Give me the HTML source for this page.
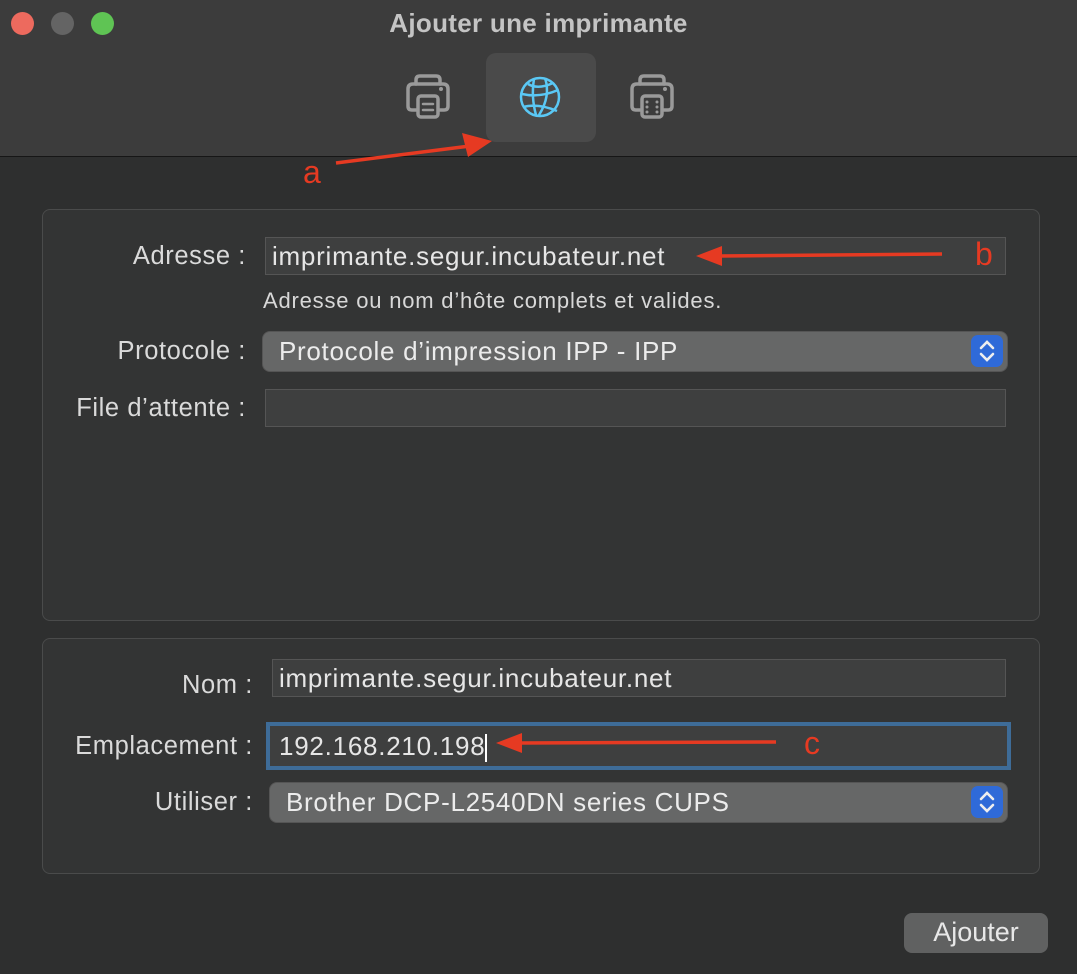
<!DOCTYPE html>
<html><head><meta charset="utf-8"><style>
*{box-sizing:border-box;margin:0;padding:0}
body{width:1077px;height:974px;background:#2e2f2f;font-family:"Liberation Sans",sans-serif;position:relative;overflow:hidden;color:#dcdcdc}
.abs{position:absolute}
.tb{left:0;top:0;width:1077px;height:157px;background:#3c3c3c;border-bottom:1px solid #161616}
.dot{width:23px;height:23px;border-radius:50%;top:12px}
.title{left:0;width:1077px;text-align:center;top:7px;font-size:26px;font-weight:bold;color:#c4c4c4;line-height:32px;letter-spacing:0.3px}
.sel{left:486px;top:53px;width:110px;height:89px;background:#4a4a4a;border-radius:10px}
.panel{left:42px;width:998px;border:1px solid #4a4b4b;border-radius:8px;background:#333434}
.lbl{font-size:25.5px;color:#dadada;text-align:right;width:240px;height:38px;line-height:38px;white-space:nowrap;letter-spacing:0.6px}
.fld{background:#3e3f3f;border:1px solid #555;font-size:26px;color:#e6e6e6;padding-left:6px;line-height:36px;white-space:nowrap;letter-spacing:0.75px}
.pop{background:#666767;border-radius:7px;font-size:26px;color:#ececec;padding-left:16px;line-height:38px;box-shadow:0 0 0 1px #555;white-space:nowrap;letter-spacing:0.7px}
.st{width:32px;height:32px;background:#2f6ad8;border-radius:7px;top:3px;right:4px}
.red{color:#e63a22;font-size:32px}
</style></head><body>
<div class="abs tb"></div>
<div class="abs dot" style="left:11px;background:#ed6a5e"></div>
<div class="abs dot" style="left:51px;background:#646464"></div>
<div class="abs dot" style="left:91px;background:#5fc454"></div>
<div class="abs title">Ajouter une imprimante</div>
<div class="abs sel"></div>
<svg class="abs" style="left:0;top:0" width="1077" height="200">
<g fill="none" stroke="#9a9a9a" stroke-width="3.5" stroke-linecap="round">
<path d="M416 84 v-4 q0-4 4-4 h16 q4 0 4 4 v4"/>
<path d="M416 110 h-4 q-4 0-4-4 v-17 q0-5 5-5 h30 q5 0 5 5 v17 q0 4-4 4 h-4"/>
<rect x="418" y="96" width="20" height="21" rx="3"/>
<path d="M423 104 h10 M423 110 h10" stroke-width="2.5"/>
<path d="M640 84 v-4 q0-4 4-4 h16 q4 0 4 4 v4"/>
<path d="M640 110 h-4 q-4 0-4-4 v-17 q0-5 5-5 h30 q5 0 5 5 v17 q0 4-4 4 h-4"/>
<rect x="642" y="96" width="20" height="21" rx="3"/>
</g>
<circle cx="441" cy="89" r="2" fill="#9a9a9a"/><circle cx="665" cy="89" r="2" fill="#9a9a9a"/>
<g fill="#9a9a9a"><circle cx="647" cy="102" r="1.5"/><circle cx="647" cy="107" r="1.5"/><circle cx="647" cy="112" r="1.5"/><circle cx="657" cy="102" r="1.5"/><circle cx="657" cy="107" r="1.5"/><circle cx="657" cy="112" r="1.5"/></g>
<g fill="none" stroke="#5ac8f5" stroke-width="2.5">
<ellipse cx="540" cy="97" rx="19" ry="19"/>
<path d="M528 84 q10 6 25 -1 M522 94 q18 4 36 -4 M523 107 q15 -4 34 4 M534 79 q-3 18 2 36 M545 78 q6 18 -6 37"/>
</g>
<path d="M336 163 L470 146" stroke="#e63a22" stroke-width="3.5"/>
<path d="M462 133 L492 141 L468 157 Z" fill="#e63a22"/>
</svg>
<div class="abs red" style="left:303px;top:154px">a</div>

<div class="abs panel" style="top:209px;height:412px"></div>
<div class="abs lbl" style="left:6px;top:237px">Adresse :</div>
<div class="abs fld" style="left:265px;top:237px;width:741px;height:38px">imprimante.segur.incubateur.net</div>
<div class="abs" style="left:263px;top:288px;font-size:22px;color:#d8d8d8;white-space:nowrap;letter-spacing:0.8px">Adresse ou nom d’hôte complets et valides.</div>
<div class="abs lbl" style="left:6px;top:332px">Protocole :</div>
<div class="abs pop" style="left:263px;top:332px;width:744px;height:39px">Protocole d’impression IPP - IPP<div class="abs st"><svg width="32" height="32"><path d="M10 13 l6-6 6 6 M10 19 l6 6 6-6" fill="none" stroke="#eee" stroke-width="2.6" stroke-linecap="round"/></svg></div></div>
<div class="abs lbl" style="left:6px;top:389px">File d’attente :</div>
<div class="abs fld" style="left:265px;top:389px;width:741px;height:38px"></div>
<svg class="abs" style="left:680px;top:235px" width="280" height="45"><path d="M40 21 L262 19" stroke="#e63a22" stroke-width="3.5"/><path d="M16 21 L42 11 L42 31 Z" fill="#e63a22"/></svg>
<div class="abs red" style="left:975px;top:236px">b</div>

<div class="abs panel" style="top:638px;height:236px"></div>
<div class="abs lbl" style="left:13px;top:666px">Nom :</div>
<div class="abs fld" style="left:272px;top:659px;width:734px;height:38px">imprimante.segur.incubateur.net</div>
<div class="abs lbl" style="left:13px;top:727px">Emplacement :</div>
<div class="abs fld" style="left:266px;top:722px;width:745px;height:48px;border:4px solid #3e6c98;line-height:40px;padding-left:9px">192.168.210.198<span style="display:inline-block;width:2px;height:28px;background:#fff;vertical-align:middle"></span></div>
<svg class="abs" style="left:480px;top:722px" width="320" height="45"><path d="M40 21 L296 20" stroke="#e63a22" stroke-width="3.5"/><path d="M16 21 L42 11 L42 31 Z" fill="#e63a22"/></svg>
<div class="abs red" style="left:804px;top:725px">c</div>
<div class="abs lbl" style="left:13px;top:783px">Utiliser :</div>
<div class="abs pop" style="left:270px;top:783px;width:737px;height:39px">Brother DCP-L2540DN series CUPS<div class="abs st"><svg width="32" height="32"><path d="M10 13 l6-6 6 6 M10 19 l6 6 6-6" fill="none" stroke="#eee" stroke-width="2.6" stroke-linecap="round"/></svg></div></div>

<div class="abs" style="left:904px;top:913px;width:144px;height:40px;background:#606161;border-radius:8px;font-size:27px;color:#e8e8e8;text-align:center;line-height:39px">Ajouter</div>
</body></html>
